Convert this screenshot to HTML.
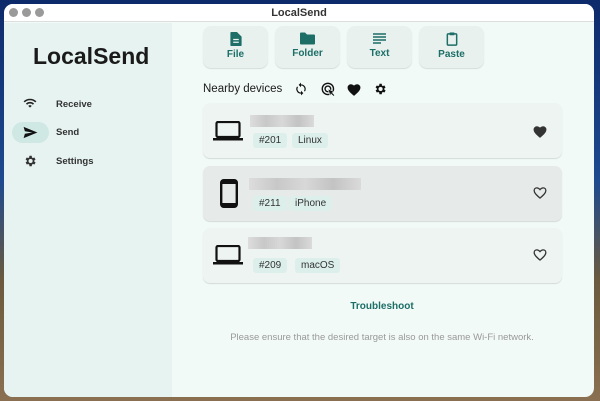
<!DOCTYPE html>
<html><head><meta charset="utf-8"><style>
*{margin:0;padding:0;box-sizing:border-box}
html,body{width:600px;height:401px;overflow:hidden}
body{background:linear-gradient(180deg,#0d2a6a 0%,#1e4a8f 45%,#6b5a3e 70%,#8a7050 100%);font-family:"Liberation Sans",sans-serif;position:relative}
.win{position:absolute;left:4px;top:4px;width:590px;height:393px;border-radius:9px;overflow:hidden;background:#f2faf8}
.title{height:18px;background:#fff;border-bottom:1px solid #ddd;text-align:center;font-size:11px;font-weight:bold;color:#333;line-height:18px;position:relative}
.dots{position:absolute;left:5px;top:4px;line-height:0}
.dots span{display:inline-block;width:9px;height:9px;border-radius:50%;background:#9a9a9a;margin-right:4px}
.side{position:absolute;left:0;top:19px;width:168px;bottom:0;background:#e7f3f1}
.logo{position:absolute;left:29px;top:20px;font-size:23px;font-weight:bold;color:#1a1a1a}
.nav{position:absolute;left:52px;font-size:9.5px;font-weight:bold;color:#333}
.pill{position:absolute;left:8px;top:99px;width:37px;height:21px;border-radius:11px;background:#cfe8e4}
.ico{position:absolute}
.main{position:absolute;left:168px;top:19px;right:0;bottom:0}
.btn{position:absolute;top:3px;width:65px;height:42px;border-radius:8px;background:#e9f1ef;box-shadow:0 1px 1px rgba(0,0,0,.12);text-align:center;color:#1c6e66;font-size:10px;font-weight:bold}
.btn svg{display:block;margin:6px auto 3px}
.nb{position:absolute;left:31px;top:60px;font-size:11.5px;color:#1a1a1a}
.card{position:absolute;left:31px;width:359px;height:55px;border-radius:7px;background:#eef4f2;box-shadow:0 1px 1px rgba(0,0,0,.13)}
.card.g{background:#e6eae9}
.tag{position:absolute;top:30px;height:15px;border-radius:3px;background:#dcefeb;font-size:10px;color:#333;line-height:15px;padding:0 6px}
.blur{position:absolute;left:47px;top:12px;height:12px;background:linear-gradient(90deg,#ddd,#c8c8c8,#d8d8d8,#c3c3c3,#dadada)}
.ts{position:absolute;left:0;width:420px;text-align:center;top:278px;font-size:10px;font-weight:bold;color:#1c6e66}
.hint{position:absolute;left:0;width:420px;text-align:center;top:309px;font-size:9.5px;color:#999}
</style></head><body>
<div class="win">
<div class="title"><div class="dots"><span></span><span></span><span></span></div>LocalSend</div>
<div class="side">
<div class="logo">LocalSend</div>
<div class="pill"></div>
<svg class="ico" style="left:19px;top:74px" width="14" height="12" viewBox="0 0 24 20"><path d="M1 7a16 16 0 0 1 22 0l-2 2a13 13 0 0 0-18 0zM5 11a10 10 0 0 1 14 0l-2 2a7 7 0 0 0-10 0zM9 15a4 4 0 0 1 6 0l-3 3z" fill="#222"/></svg>
<div class="nav" style="top:76px">Receive</div>
<svg class="ico" style="left:19px;top:103px" width="15" height="13" viewBox="0 0 24 20"><path d="M1 1l22 9L1 19l2-7 12-2-12-2z" fill="#111"/></svg>
<div class="nav" style="top:104px">Send</div>
<svg class="ico" style="left:19px;top:131px" width="14" height="14" viewBox="0 0 24 24"><path d="M19.4 13a7 7 0 0 0 0-2l2.1-1.6-2-3.5-2.5 1a7 7 0 0 0-1.7-1L15 3h-4l-.4 2.9a7 7 0 0 0-1.7 1l-2.5-1-2 3.5L6.6 11a7 7 0 0 0 0 2l-2.1 1.6 2 3.5 2.5-1a7 7 0 0 0 1.7 1L11 21h4l.4-2.9a7 7 0 0 0 1.7-1l2.5 1 2-3.5zM13 15.5a3.5 3.5 0 1 1 0-7 3.5 3.5 0 0 1 0 7z" fill="#333"/></svg>
<div class="nav" style="top:133px">Settings</div>
</div>
<div class="main">
<div class="btn" style="left:31px"><svg width="12" height="14" viewBox="0 0 12 15"><path d="M0 1a1 1 0 0 1 1-1h6l5 5v9a1 1 0 0 1-1 1H1a1 1 0 0 1-1-1z" fill="#1c6e66"/><path d="M3 8h6M3 11h6" stroke="#e9f1ef" stroke-width="1.3"/></svg>File</div>
<div class="btn" style="left:103px"><svg width="15" height="13" viewBox="0 0 15 12"><path d="M0 1a1 1 0 0 1 1-1h4l2 2h7a1 1 0 0 1 1 1v8a1 1 0 0 1-1 1H1a1 1 0 0 1-1-1z" fill="#1c6e66"/></svg>Folder</div>
<div class="btn" style="left:175px"><svg width="13" height="13" viewBox="0 0 13 12"><path d="M0 1.5h13M0 4.5h13M0 7.5h13M0 10.5h8" stroke="#1c6e66" stroke-width="1.6"/></svg>Text</div>
<div class="btn" style="left:247px"><svg width="12" height="14" viewBox="0 0 12 15"><rect x="1" y="2" width="10" height="12" rx="1" fill="none" stroke="#1c6e66" stroke-width="1.6"/><rect x="3.5" y="0.5" width="5" height="3" fill="#1c6e66"/></svg>Paste</div>
<div class="nb">Nearby devices</div>
<svg class="ico" style="left:122px;top:59px" width="14" height="14" viewBox="0 0 24 24"><path d="M12 4V1L8 5l4 4V6a6 6 0 0 1 5.2 9l1.5 1.5A8 8 0 0 0 12 4zM12 18a6 6 0 0 1-5.2-9L5.3 7.5A8 8 0 0 0 12 20v3l4-4-4-4z" fill="#111"/></svg>
<svg class="ico" style="left:149px;top:59px" width="15" height="15" viewBox="0 0 24 24"><circle cx="11" cy="11" r="9" fill="none" stroke="#111" stroke-width="2.2"/><circle cx="11" cy="11" r="4.5" fill="none" stroke="#111" stroke-width="2.2"/><path d="M11 11l11 5-4 1 4 4-2 2-4-4-1 4z" fill="#111" stroke="#f2faf8" stroke-width="1"/></svg>
<svg class="ico" style="left:175px;top:60px" width="14" height="13" viewBox="0 0 24 22"><path d="M12 22l-1.5-1.3C5 15.7 1 12.2 1 7.5A5.5 5.5 0 0 1 6.5 2c1.9 0 3.7.9 5.5 2.4C13.8 2.9 15.6 2 17.5 2A5.5 5.5 0 0 1 23 7.5c0 4.7-4 8.2-9.5 13.2z" fill="#111"/></svg>
<svg class="ico" style="left:201px;top:59px" width="14" height="14" viewBox="0 0 24 24"><path d="M19.4 13a7 7 0 0 0 0-2l2.1-1.6-2-3.5-2.5 1a7 7 0 0 0-1.7-1L15 3h-4l-.4 2.9a7 7 0 0 0-1.7 1l-2.5-1-2 3.5L6.6 11a7 7 0 0 0 0 2l-2.1 1.6 2 3.5 2.5-1a7 7 0 0 0 1.7 1L11 21h4l.4-2.9a7 7 0 0 0 1.7-1l2.5 1 2-3.5zM13 15.5a3.5 3.5 0 1 1 0-7 3.5 3.5 0 0 1 0 7z" fill="#111"/></svg>

<div class="card" style="top:80px">
<svg class="ico" style="left:10px;top:18px" width="30" height="20" viewBox="0 0 30 20"><rect x="3.5" y="1" width="23" height="15" rx="1.5" fill="none" stroke="#111" stroke-width="2.2"/><rect x="0" y="17" width="30" height="2.5" fill="#111"/></svg>
<div class="blur" style="width:64px"></div>
<div class="tag" style="left:50px">#201</div><div class="tag" style="left:89px">Linux</div>
<svg class="ico" style="left:330px;top:22px" width="14" height="13" viewBox="0 0 24 22"><path d="M12 22l-1.5-1.3C5 15.7 1 12.2 1 7.5A5.5 5.5 0 0 1 6.5 2c1.9 0 3.7.9 5.5 2.4C13.8 2.9 15.6 2 17.5 2A5.5 5.5 0 0 1 23 7.5c0 4.7-4 8.2-9.5 13.2z" fill="#333"/></svg>
</div>
<div class="card g" style="top:143px">
<svg class="ico" style="left:17px;top:13px" width="18" height="29" viewBox="0 0 18 29"><rect x="1.2" y="1.2" width="15.6" height="26.6" rx="2.5" fill="none" stroke="#111" stroke-width="2.4"/><rect x="1" y="1" width="16" height="4" fill="#111"/><rect x="1" y="24" width="16" height="4" fill="#111"/></svg>
<div class="blur" style="width:112px;left:46px"></div>
<div class="tag" style="left:50px">#211</div><div class="tag" style="left:86px">iPhone</div>
<svg class="ico" style="left:330px;top:20px" width="14" height="13" viewBox="0 0 24 22"><path d="M12 20.5l-1.2-1C5.6 14.8 2 11.6 2 7.5A4.5 4.5 0 0 1 6.5 3c1.9 0 3.8 1 5.5 3 1.7-2 3.6-3 5.5-3A4.5 4.5 0 0 1 22 7.5c0 4.1-3.6 7.3-8.8 12z" fill="none" stroke="#333" stroke-width="2.2"/></svg>
</div>
<div class="card" style="top:205px">
<svg class="ico" style="left:10px;top:17px" width="30" height="20" viewBox="0 0 30 20"><rect x="3.5" y="1" width="23" height="15" rx="1.5" fill="none" stroke="#111" stroke-width="2.2"/><rect x="0" y="17" width="30" height="2.5" fill="#111"/></svg>
<div class="blur" style="width:64px;left:45px;top:9px"></div>
<div class="tag" style="left:50px">#209</div><div class="tag" style="left:92px">macOS</div>
<svg class="ico" style="left:330px;top:20px" width="14" height="13" viewBox="0 0 24 22"><path d="M12 20.5l-1.2-1C5.6 14.8 2 11.6 2 7.5A4.5 4.5 0 0 1 6.5 3c1.9 0 3.8 1 5.5 3 1.7-2 3.6-3 5.5-3A4.5 4.5 0 0 1 22 7.5c0 4.1-3.6 7.3-8.8 12z" fill="none" stroke="#333" stroke-width="2.2"/></svg>
</div>
<div class="ts">Troubleshoot</div>
<div class="hint">Please ensure that the desired target is also on the same Wi-Fi network.</div>
</div>
</div>
</body></html>
